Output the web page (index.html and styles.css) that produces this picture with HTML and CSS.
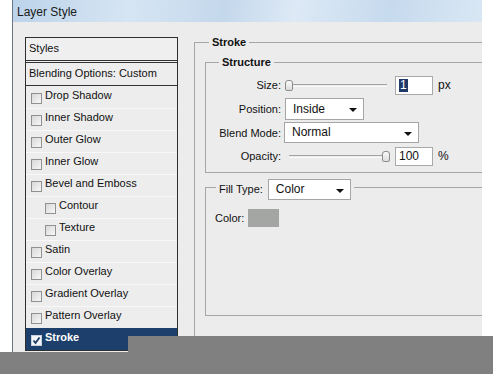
FILE: index.html
```html
<!DOCTYPE html>
<html lang="en">
<head>
    <meta charset="UTF-8">
    <meta name="viewport" content="width=device-width, initial-scale=1.0">
    <title>Layer Style</title>
    <link rel="stylesheet" href="styles.css">
</head>
<body>
    <div class="window">
        <div class="titlebar">Layer Style</div>
        <div class="content">
            <div class="styles-list">
                <div class="list-head">Styles</div>
                <div class="list-blend">Blending Options: Custom</div>
                <div class="item"><span class="check"></span>Drop Shadow</div>
                <div class="item"><span class="check"></span>Inner Shadow</div>
                <div class="item"><span class="check"></span>Outer Glow</div>
                <div class="item"><span class="check"></span>Inner Glow</div>
                <div class="item"><span class="check"></span>Bevel and Emboss</div>
                <div class="item sub"><span class="check"></span>Contour</div>
                <div class="item sub"><span class="check"></span>Texture</div>
                <div class="item"><span class="check"></span>Satin</div>
                <div class="item"><span class="check"></span>Color Overlay</div>
                <div class="item"><span class="check"></span>Gradient Overlay</div>
                <div class="item"><span class="check"></span>Pattern Overlay</div>
                <div class="item selected">
                    <span class="check checked">
                        <svg width="9" height="9" viewBox="0 0 9 9"><path d="M1.5 4.5 L3.5 7 L7.5 1.5" fill="none" stroke="#1c3d68" stroke-width="1.8"/></svg>
                    </span>Stroke
                </div>
            </div>

            <div class="panel">
                <fieldset class="group stroke">
                    <legend>Stroke</legend>

                    <fieldset class="group structure">
                        <legend>Structure</legend>
                        <div class="row">
                            <label>Size:</label>
                            <div class="slider">
                                <div class="track"></div>
                                <div class="thumb" style="left: 0px"></div>
                            </div>
                            <div class="field"><span class="sel">1</span></div>
                            <span class="unit">px</span>
                        </div>
                        <div class="row">
                            <label>Position:</label>
                            <div class="select pos">Inside<span class="arrow"></span></div>
                        </div>
                        <div class="row short">
                            <label>Blend Mode:</label>
                            <div class="select blend">Normal<span class="arrow"></span></div>
                        </div>
                        <div class="row">
                            <label>Opacity:</label>
                            <div class="slider">
                                <div class="track"></div>
                                <div class="thumb" style="left: 97px"></div>
                            </div>
                            <div class="field">100</div>
                            <span class="unit">%</span>
                        </div>
                    </fieldset>

                    <fieldset class="group fill">
                        <legend>
                            <span>Fill Type:</span>
                            <div class="select filltype">Color<span class="arrow"></span></div>
                        </legend>
                        <div class="color-row">
                            <span>Color:</span>
                            <div class="swatch"></div>
                        </div>
                    </fieldset>
                </fieldset>
            </div>
        </div>
    </div>
    <div class="cover cover-right"></div>
    <div class="cover cover-bottom"></div>
</body>
</html>
```

FILE: styles.css
```css
body {
    margin: 0;
    background-color: #ffffff;
    font-family: "Liberation Sans", Arial, sans-serif;
    font-size: 11px;
    color: #111;
    height: 374px;
    overflow: hidden;
}
.window {
    margin-left: 12px;
    width: 469px;
    height: 374px;
    border-left: 1px solid #6b7685;
    background-color: #ececec;
    overflow: hidden;
}
.titlebar {
    height: 22px;
    line-height: 24px;
    padding-left: 4px;
    font-size: 12px;
    color: #1a1a1a;
    background: linear-gradient(100deg, #bcd3ea 0%, #d6e5f3 25%, #c4d8ec 45%, #dde9f5 60%, #c6daee 80%, #d9e7f4 100%);
}
.content {
    display: flex;
    padding: 13px 0 0 12px;
}
.styles-list {
    width: 153px;
    box-sizing: border-box;
    margin-top: 2px;
    border: 1px solid #2e2e2e;
    background-color: #ededed;
}
.list-head {
    height: 22px;
    line-height: 21px;
    padding-left: 3px;
    border-bottom: 3px double #333;
    background-color: #efefef;
}
.list-blend {
    height: 22px;
    line-height: 21px;
    padding-left: 3px;
    border-bottom: 1px solid #333;
}
.item {
    height: 20px;
    line-height: 14px;
    padding-top: 1px;
    border-top: 1px solid #f8f8f8;
    display: flex;
    align-items: flex-start;
    padding-left: 5px;
}
.item:nth-child(3) {
    border-top-color: #ededed;
}
.item.sub {
    padding-left: 19px;
}
.item.selected {
    background-color: #1c3f6c;
    border-top-color: #1c3f6c;
    color: #fff;
    font-weight: bold;
}
.check {
    width: 9px;
    height: 9px;
    border: 1px solid #909191;
    background: linear-gradient(135deg, #d8d8d8, #f7f7f7);
    margin: 5px 3px 0 0;
    display: flex;
    align-items: center;
    justify-content: center;
}
.check.checked {
    background: #f4f6f8;
    border-color: #c9d2dc;
}
.panel {
    flex: 1;
    margin-left: 16px;
}
.group {
    margin: 0;
    border: 0;
    border-top: 1px solid #a6a6a6;
    border-left: 1px solid #a6a6a6;
    min-width: 0;
}
.group > legend {
    line-height: 14px;
    padding: 0 3px;
    font-weight: bold;
}
.stroke {
    padding: 6px 0 30px 10px;
}
.stroke > legend {
    margin-left: 4px;
}
.structure {
    padding: 5px 0 5px 0;
    border-bottom: 1px solid #a6a6a6;
}
.structure > legend {
    margin-left: 13px;
}
.row {
    display: flex;
    align-items: center;
    height: 22px;
    margin-bottom: 2px;
}
.row.short {
    height: 21px;
}
.row:last-child {
    margin-bottom: 0;
}
.row label {
    width: 75px;
    text-align: right;
    margin-right: 4px;
}
.slider {
    position: relative;
    width: 105px;
    height: 22px;
}
.track {
    position: absolute;
    left: 4px;
    right: 3px;
    top: 10px;
    height: 1px;
    border-top: 1px solid #a3a3a3;
    border-bottom: 1px solid #fafafa;
}
.thumb {
    position: absolute;
    top: 6px;
    width: 6px;
    height: 9px;
    border: 1px solid #8d8d8d;
    border-radius: 3px 3px 2px 2px;
    background: linear-gradient(#fafafa, #dcdcdc);
}
.field {
    width: 33px;
    height: 17px;
    line-height: 17px;
    margin-left: 5px;
    padding-left: 3px;
    border: 1px solid #a9a9a9;
    background-color: #fff;
    font-size: 12px;
}
.sel {
    display: inline-block;
    background-color: #1f3a66;
    color: #fff;
    line-height: 13px;
    padding: 0 1px;
}
.unit {
    margin-left: 5px;
    font-size: 12px;
}
.select {
    position: relative;
    box-sizing: border-box;
    height: 22px;
    line-height: 20px;
    padding-left: 7px;
    border: 1px solid #a5a5a5;
    background-color: #fff;
    font-size: 12px;
    font-weight: normal;
}
.arrow {
    position: absolute;
    right: 6px;
    top: 9px;
    width: 0;
    height: 0;
    border-left: 4px solid transparent;
    border-right: 4px solid transparent;
    border-top: 4px solid #111;
}
.pos {
    width: 79px;
}
.blend {
    width: 135px;
    height: 21px;
    margin-left: -1px;
    line-height: 19px;
}
.fill {
    margin-top: 6px;
    padding: 14px 0 88px 9px;
    border-bottom: 1px solid #a6a6a6;
}
.fill > legend {
    display: flex;
    align-items: flex-start;
    height: 16px;
    margin-left: 1px;
    font-weight: normal;
}
.fill > legend span {
    line-height: 21px;
}
.filltype {
    width: 83px;
    height: 21px;
    line-height: 19px;
    margin-left: 5px;
}
.color-row {
    display: flex;
    align-items: center;
    height: 18px;
}
.swatch {
    width: 31px;
    height: 18px;
    margin-left: 4px;
    background-color: #a4a6a4;
}
.cover {
    position: absolute;
    background-color: #808080;
}
.cover-right {
    left: 128px;
    top: 336px;
    right: 0;
    bottom: 0;
}
.cover-bottom {
    left: 0;
    top: 352px;
    right: 0;
    bottom: 0;
}
```
